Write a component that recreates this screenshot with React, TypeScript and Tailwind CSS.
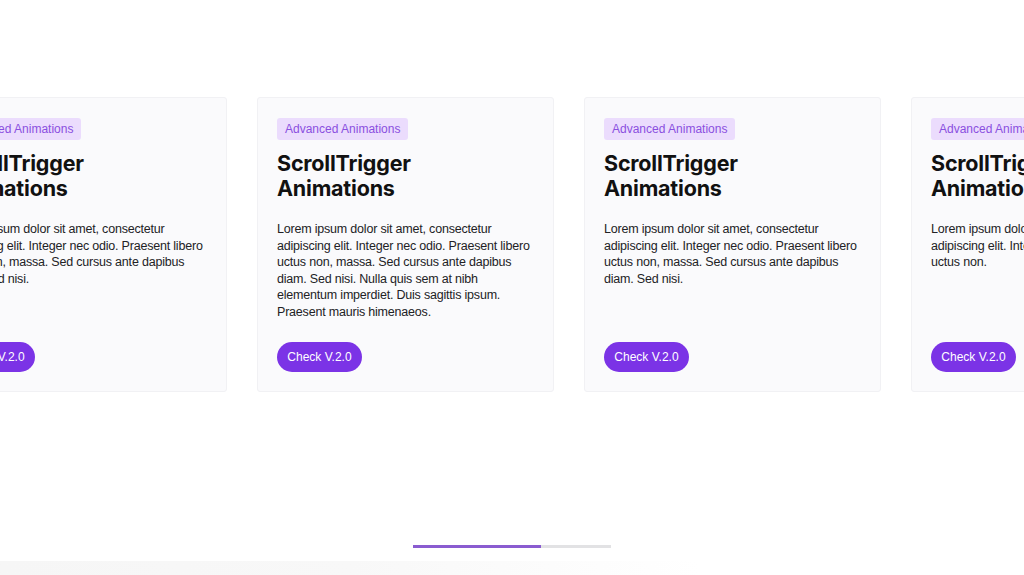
import React from 'react';

type Card = {
    tag: string;
    title: string;
    body: string;
};

const shortBody =
    'Lorem ipsum dolor sit amet, consectetur adipiscing elit. Integer nec odio. Praesent libero uctus non, massa. Sed cursus ante dapibus diam. Sed nisi.';

const cards: Card[] = [
    { tag: 'Advanced Animations', title: 'ScrollTrigger Animations', body: shortBody },
    {
        tag: 'Advanced Animations',
        title: 'ScrollTrigger Animations',
        body: 'Lorem ipsum dolor sit amet, consectetur adipiscing elit. Integer nec odio. Praesent libero uctus non, massa. Sed cursus ante dapibus diam. Sed nisi. Nulla quis sem at nibh elementum imperdiet. Duis sagittis ipsum. Praesent mauris himenaeos.',
    },
    { tag: 'Advanced Animations', title: 'ScrollTrigger Animations', body: shortBody },
    {
        tag: 'Advanced Animations',
        title: 'ScrollTrigger Animations',
        body: 'Lorem ipsum dolor sit amet, consectetur adipiscing elit. Integer nec odio. Praesent libero uctus non.',
    },
];

const SliderCard = ({ card }: { card: Card }) => (
    <div className="flex h-[295px] w-[297px] shrink-0 flex-col rounded-[3px] border border-[#f1f1f4] bg-[#fafafc] px-[19px] pt-[20px] pb-[19px] font-['Liberation_Sans',Arial,sans-serif]">
        <span className="self-start whitespace-nowrap rounded-[3px] bg-[#ebdcfd] px-2 py-[3px] text-[12px] leading-[16px] text-[#8a4fe0]">
            {card.tag}
        </span>
        <h2 className="mt-[11px] w-[150px] font-['Inter',sans-serif] text-[21.5px] font-bold leading-[25px] tracking-[-0.2px] text-[#111111]">
            {card.title}
        </h2>
        <p className="mt-[20px] text-[12.5px] leading-[16.5px] tracking-[-0.2px] text-[#222225]">{card.body}</p>
        <button className="mt-auto flex h-[30px] w-[85px] items-center justify-center self-start whitespace-nowrap rounded-full bg-[#7b33e6] text-[12px] text-white">
            Check V.2.0
        </button>
    </div>
);

export default function App() {
    return (
        <div
            className="flex h-[575px] w-full flex-col overflow-hidden bg-white"
            style={{ fontFamily: 'Inter, "Noto Sans", sans-serif' }}
        >
            <div className="mt-[97px] -ml-[70px] flex gap-[30px]">
                {cards.map((card, i) => (
                    <SliderCard key={i} card={card} />
                ))}
            </div>

            <div className="mx-auto mt-[153px] flex h-[3px] w-[198px] bg-[#e2e2e4]">
                <div className="h-full w-[128px] bg-[#8a5cd0]" />
            </div>

            <div className="mt-auto h-[14px] w-[700px] bg-gradient-to-r from-[#f6f6f6] via-[#f8f8f8] to-white" />
        </div>
    );
}
